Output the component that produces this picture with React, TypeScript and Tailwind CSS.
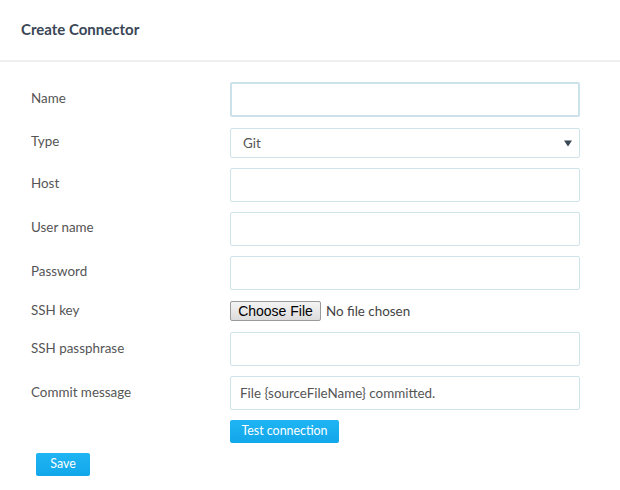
import React from 'react';

const Label: React.FC<{ children: React.ReactNode }> = ({ children }) => (
  <div className="w-[199px] shrink-0 -mt-[3px] text-[13.4px] text-[#555]">{children}</div>
);

const TextBox: React.FC<{ value?: string; focused?: boolean }> = ({ value, focused }) => (
  <div
    className={
      focused
        ? 'w-[350px] h-[35px] border-2 border-[#cce2ea] rounded-[2px] bg-white'
        : 'w-[350px] h-[34px] border border-[#cfe4ea] rounded-[2px] bg-white flex items-center px-[9px] text-[13.4px] text-[#555]'
    }
  >
    {value}
  </div>
);

export default function App() {
  return (
    <div className="w-[620px] h-[490px] bg-white font-['Lato','Noto_Sans',sans-serif] overflow-hidden">
      <div className="h-[62px] flex items-center pl-[21px] pb-[2px] border-b-2 border-[#efefef]">
        <h1 className="text-[15px] font-bold text-[#3a4656]">Create Connector</h1>
      </div>

      <div className="pl-[31px] pt-[20px] flex flex-col">
        <div className="flex items-center">
          <Label>Name</Label>
          <TextBox focused />
        </div>

        <div className="flex items-center mt-[11px]">
          <Label>Type</Label>
          <div className="w-[350px] h-[30px] border border-[#cfe4ea] rounded-[2px] flex items-center justify-between pl-[12px] pr-[7px] text-[13.4px] text-[#555]">
            <span>Git</span>
            <svg width="8" height="8" viewBox="0 0 8 8">
              <path d="M0 1.5 H8 L4 7.5 Z" fill="#3a4656" />
            </svg>
          </div>
        </div>

        <div className="flex items-center mt-[10px]">
          <Label>Host</Label>
          <TextBox />
        </div>

        <div className="flex items-center mt-[10px]">
          <Label>User name</Label>
          <TextBox />
        </div>

        <div className="flex items-center mt-[10px]">
          <Label>Password</Label>
          <TextBox />
        </div>

        <div className="flex items-center mt-[11px]">
          <Label>SSH key</Label>
          <div className="flex items-center">
            <span className="h-[20px] w-[91px] flex items-center justify-center border border-[#9a9a9a] rounded-[2px] bg-gradient-to-b from-[#f4f4f4] to-[#dcdcdc] font-['Liberation_Sans',Arial,sans-serif] text-[14px] text-black">
              Choose File
            </span>
            <span className="ml-[5px] text-[13.4px] text-[#444]">No file chosen</span>
          </div>
        </div>

        <div className="flex items-center mt-[11px]">
          <Label>SSH passphrase</Label>
          <TextBox />
        </div>

        <div className="flex items-center mt-[10px]">
          <Label>Commit message</Label>
          <TextBox value="File {sourceFileName} committed." />
        </div>

        <div className="flex mt-[10px] pl-[199px]">
          <button className="h-[23px] w-[109px] rounded-[2px] bg-gradient-to-b from-[#1fb4f3] to-[#12a7ea] text-white text-[12.4px]">
            Test connection
          </button>
        </div>

        <div className="flex mt-[10px] pl-[5px]">
          <button className="h-[23px] w-[54px] rounded-[2px] bg-gradient-to-b from-[#1fb4f3] to-[#12a7ea] text-white text-[12.4px]">
            Save
          </button>
        </div>
      </div>
    </div>
  );
}
